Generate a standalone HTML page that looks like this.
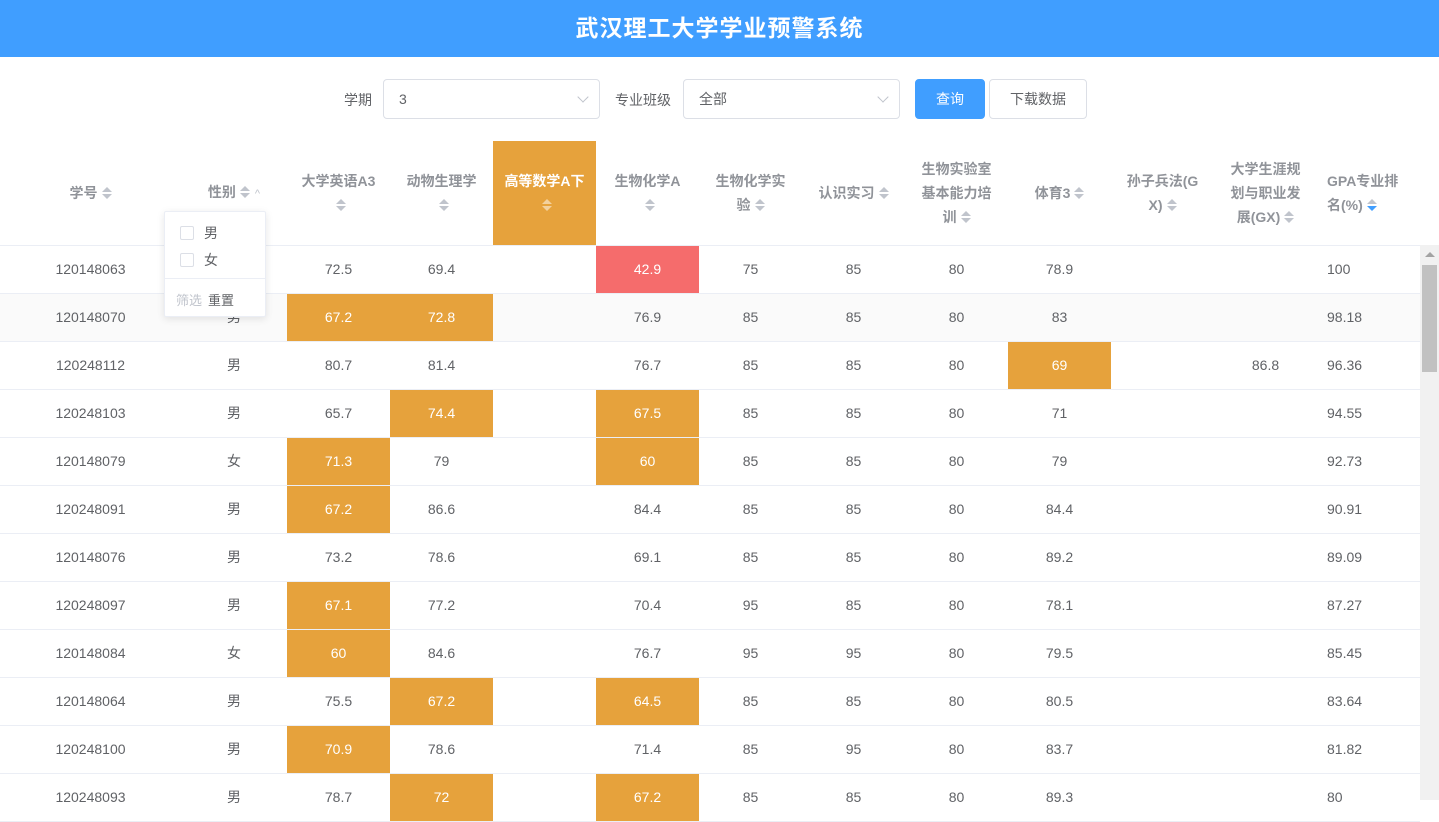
<!DOCTYPE html>
<html><head><meta charset="utf-8"><style>
*{margin:0;padding:0;box-sizing:border-box}
body{width:1439px;height:800px;overflow:hidden;background:#fff;font-family:"Liberation Sans","Noto Sans CJK SC",sans-serif;color:#606266;font-size:14px;position:relative}
.hd{position:absolute;left:0;top:0;width:1439px;height:57px;background:#409eff;color:#fff;font-size:23px;font-weight:bold;text-align:center;line-height:57px;letter-spacing:1px}
.lbl{position:absolute;top:90px;font-size:14px;color:#606266}
.sel{position:absolute;top:79px;height:40px;border:1px solid #dcdfe6;border-radius:4px;padding-left:15px;line-height:38px;font-size:14px}
.sel i{position:absolute;right:12px;top:13px;width:8px;height:8px;border-right:1px solid #c0c4cc;border-bottom:1px solid #c0c4cc;transform:rotate(45deg)}
.btn{position:absolute;top:79px;height:40px;border-radius:4px;text-align:center;line-height:38px;font-size:14px}
table{position:absolute;left:0;top:141px;border-collapse:collapse;table-layout:fixed;width:1420px}
th{height:104px;color:#909399;font-weight:bold;font-size:14px;line-height:24px;text-align:center;border-bottom:1px solid #ebeef5;padding:0 8px;vertical-align:middle}
td{height:48px;text-align:center;border-bottom:1px solid #ebeef5;font-size:14px}
tr.s td{background:#fafafa}
tr td.o{background:#e6a23c;color:#fff}
tr td.r{background:#f56c6c;color:#fff}
th.o{background:#e6a23c;color:#fff}
.c{display:inline-block;width:10px;height:14px;position:relative;vertical-align:middle;margin-left:4px;margin-top:-3px}
.c:before,.c:after{content:"";position:absolute;left:0;border-left:5px solid transparent;border-right:5px solid transparent}
.c:before{top:1px;border-bottom:5px solid #c0c4cc}
.c:after{bottom:1px;border-top:5px solid #c0c4cc}
th.o .c:before{border-bottom-color:#f3d19e}th.o .c:after{border-top-color:#f3d19e}
.c.d:after{border-top-color:#409eff}
.l{text-align:left;padding-left:10px}
td.l{padding-left:10px}
.pop{position:absolute;left:164px;top:211px;width:102px;height:106px;background:#fff;border:1px solid #ebeef5;box-shadow:0 2px 8px rgba(0,0,0,.1);border-radius:2px;font-size:14px}
.cb{position:absolute;left:15px;width:14px;height:14px;border:1px solid #dcdfe6;border-radius:2px}
</style></head><body>
<div class="hd">武汉理工大学学业预警系统</div>
<div class="lbl" style="left:344px">学期</div>
<div class="sel" style="left:383px;width:217px">3<i></i></div>
<div class="lbl" style="left:615px">专业班级</div>
<div class="sel" style="left:683px;width:217px">全部<i></i></div>
<div class="btn" style="left:915px;width:70px;background:#409eff;color:#fff;border:1px solid #409eff">查询</div>
<div class="btn" style="left:989px;width:98px;border:1px solid #dcdfe6;color:#606266">下载数据</div>
<table>
<colgroup><col style="width:181px"><col style="width:106px"><col style="width:103px"><col style="width:103px"><col style="width:103px"><col style="width:103px"><col style="width:103px"><col style="width:103px"><col style="width:103px"><col style="width:103px"><col style="width:103px"><col style="width:103px"><col style="width:103px"></colgroup>
<tr><th>学号<span class="c"></span></th><th>性别<span class="c"></span><span style="color:#c0c4cc;font-weight:normal;font-size:11px;margin-left:5px">^</span></th><th>大学英语A3<br><span class="c"></span></th><th>动物生理学<br><span class="c"></span></th><th class="o">高等数学A下<br><span class="c"></span></th><th>生物化学A<br><span class="c"></span></th><th>生物化学实<br>验<span class="c"></span></th><th>认识实习<span class="c"></span></th><th>生物实验室<br>基本能力培<br>训<span class="c"></span></th><th>体育3<span class="c"></span></th><th>孙子兵法(G<br>X)<span class="c"></span></th><th>大学生涯规<br>划与职业发<br>展(GX)<span class="c"></span></th><th class="l">GPA专业排<br>名(%)<span class="c d"></span></th></tr>
<tr><td>120148063</td><td>男</td><td>72.5</td><td>69.4</td><td></td><td class="r">42.9</td><td>75</td><td>85</td><td>80</td><td>78.9</td><td></td><td></td><td class="l">100</td></tr>
<tr class="s"><td>120148070</td><td>男</td><td class="o">67.2</td><td class="o">72.8</td><td></td><td>76.9</td><td>85</td><td>85</td><td>80</td><td>83</td><td></td><td></td><td class="l">98.18</td></tr>
<tr><td>120248112</td><td>男</td><td>80.7</td><td>81.4</td><td></td><td>76.7</td><td>85</td><td>85</td><td>80</td><td class="o">69</td><td></td><td>86.8</td><td class="l">96.36</td></tr>
<tr><td>120248103</td><td>男</td><td>65.7</td><td class="o">74.4</td><td></td><td class="o">67.5</td><td>85</td><td>85</td><td>80</td><td>71</td><td></td><td></td><td class="l">94.55</td></tr>
<tr><td>120148079</td><td>女</td><td class="o">71.3</td><td>79</td><td></td><td class="o">60</td><td>85</td><td>85</td><td>80</td><td>79</td><td></td><td></td><td class="l">92.73</td></tr>
<tr><td>120248091</td><td>男</td><td class="o">67.2</td><td>86.6</td><td></td><td>84.4</td><td>85</td><td>85</td><td>80</td><td>84.4</td><td></td><td></td><td class="l">90.91</td></tr>
<tr><td>120148076</td><td>男</td><td>73.2</td><td>78.6</td><td></td><td>69.1</td><td>85</td><td>85</td><td>80</td><td>89.2</td><td></td><td></td><td class="l">89.09</td></tr>
<tr><td>120248097</td><td>男</td><td class="o">67.1</td><td>77.2</td><td></td><td>70.4</td><td>95</td><td>85</td><td>80</td><td>78.1</td><td></td><td></td><td class="l">87.27</td></tr>
<tr><td>120148084</td><td>女</td><td class="o">60</td><td>84.6</td><td></td><td>76.7</td><td>95</td><td>95</td><td>80</td><td>79.5</td><td></td><td></td><td class="l">85.45</td></tr>
<tr><td>120148064</td><td>男</td><td>75.5</td><td class="o">67.2</td><td></td><td class="o">64.5</td><td>85</td><td>85</td><td>80</td><td>80.5</td><td></td><td></td><td class="l">83.64</td></tr>
<tr><td>120248100</td><td>男</td><td class="o">70.9</td><td>78.6</td><td></td><td>71.4</td><td>85</td><td>95</td><td>80</td><td>83.7</td><td></td><td></td><td class="l">81.82</td></tr>
<tr><td>120248093</td><td>男</td><td>78.7</td><td class="o">72</td><td></td><td class="o">67.2</td><td>85</td><td>85</td><td>80</td><td>89.3</td><td></td><td></td><td class="l">80</td></tr>
</table>
<div style="position:absolute;left:1420px;top:245px;width:19px;height:555px;background:#f1f1f1"></div>
<div style="position:absolute;left:1425px;top:252px;border-left:5px solid transparent;border-right:5px solid transparent;border-bottom:5px solid #a3a3a3"></div>
<div style="position:absolute;left:1422px;top:265px;width:15px;height:107px;background:#c1c1c1"></div>
<div class="pop">
<div class="cb" style="top:14px"></div><div style="position:absolute;left:39px;top:11px;color:#606266">男</div>
<div class="cb" style="top:41px"></div><div style="position:absolute;left:39px;top:38px;color:#606266">女</div>
<div style="position:absolute;left:0;top:66px;width:100px;border-top:1px solid #ebeef5"></div>
<div style="position:absolute;left:11px;top:78px;font-size:13px;color:#c0c4cc">筛选</div>
<div style="position:absolute;left:43px;top:78px;font-size:13px;color:#606266">重置</div>
</div>
</body></html>
